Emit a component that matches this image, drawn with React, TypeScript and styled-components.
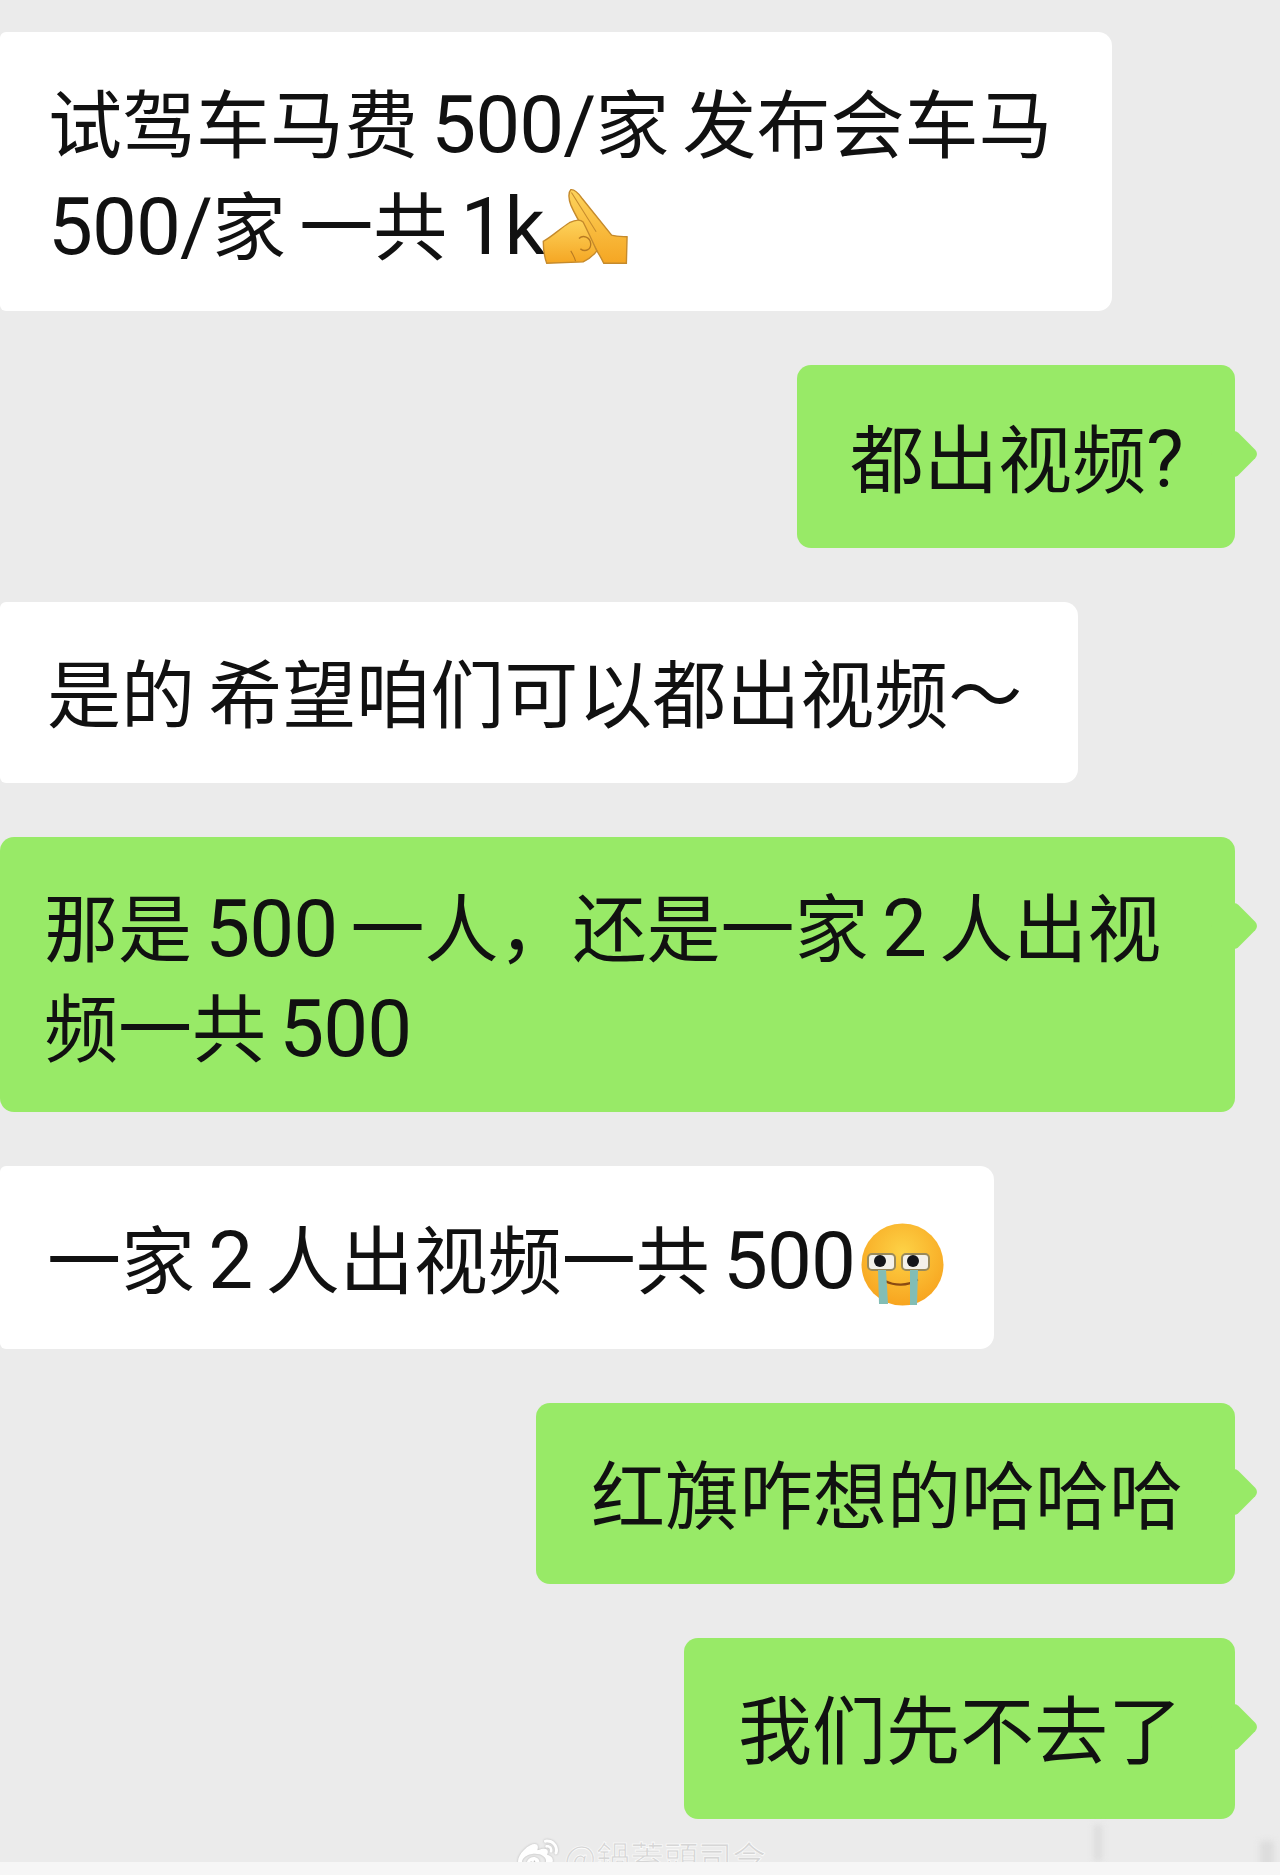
import { FC, ReactElement, ReactNode } from 'react';
import styled, { createGlobalStyle } from 'styled-components';
import { FaWeibo } from 'react-icons/fa';

const GlobalStyle = createGlobalStyle`
    html, body {
        margin: 0;
        padding: 0;
        background: #ebebeb;
    }
`;

const HandsEmoji: FC = (): ReactElement => (
    <HandsIcon viewBox="140 40 255 230">
        <defs>
            <linearGradient id="hand" x1="0" y1="0" x2="0" y2="1">
                <stop offset="0" stopColor="#fdd35c" />
                <stop offset="1" stopColor="#f5a623" />
            </linearGradient>
        </defs>
        <path
            d="M226 48C238 46 248 58 258 72L345 180C360 184 378 184 390 185L388 262H322C312 240 296 215 280 190C262 160 240 125 226 92C220 76 218 56 226 48Z"
            fill="url(#hand)"
            stroke="#c58a2c"
            strokeWidth="4"
        />
        <path
            d="M146 198C170 186 196 160 222 144C238 136 254 134 262 142C276 170 290 200 302 226C292 240 278 250 262 258L156 262C148 240 146 220 146 198Z"
            fill="url(#hand)"
            stroke="#c58a2c"
            strokeWidth="4"
        />
        <path d="M228 56L300 170" fill="none" stroke="#c58a2c" strokeWidth="3" />
        <path
            d="M250 190C262 178 282 186 284 204C286 220 270 232 254 220"
            fill="none"
            stroke="#b87a22"
            strokeWidth="4"
        />
        <path d="M226 226C232 236 238 246 240 256" fill="none" stroke="#b87a22" strokeWidth="3" />
    </HandsIcon>
);

const CryingEmoji: FC = (): ReactElement => (
    <CryingIcon viewBox="0 0 83 83">
        <defs>
            <radialGradient id="face" cx="0.5" cy="0.35" r="0.7">
                <stop offset="0" stopColor="#fdd246" />
                <stop offset="1" stopColor="#f7a11c" />
            </radialGradient>
        </defs>
        <circle cx="41.5" cy="41.5" r="41" fill="url(#face)" />
        <rect x="7" y="31" width="27" height="16" rx="4" fill="#f4f1ea" stroke="#9a8a5a" strokeWidth="2" />
        <rect x="41" y="31" width="27" height="16" rx="4" fill="#f4f1ea" stroke="#9a8a5a" strokeWidth="2" />
        <circle cx="19" cy="38" r="6" fill="#15151a" />
        <circle cx="52" cy="38" r="6" fill="#15151a" />
        <path d="M24 58C34 63 46 63 56 57" fill="none" stroke="#8a4a12" strokeWidth="2.4" strokeLinecap="round" />
        <path d="M17 47H25L27 81H18Z" fill="#82bdb5" />
        <path d="M49 47H57L56 82H49Z" fill="#82bdb5" />
    </CryingIcon>
);

type Row = {
    side: 'left' | 'right';
    width: number;
    inset: number;
    leading?: number;
    multi?: boolean;
    text: ReactNode;
};

const App: FC = (): ReactElement => {
    const rows: Row[] = [
        {
            side: 'left',
            width: 1112,
            inset: 48,
            leading: 100,
            multi: true,
            text: (
                <>
                    试驾车马费 <Num>500/</Num>家 发布会车马
                    <br />
                    <Num>500/</Num>家 一共 <Num>1k</Num>
                    <HandsEmoji />
                </>
            )
        },
        {
            side: 'right',
            width: 438,
            inset: 53,
            text: (
                <>
                    都出视频<Num>?</Num>
                </>
            )
        },
        { side: 'left', width: 1078, inset: 47, text: '是的 希望咱们可以都出视频～' },
        {
            side: 'right',
            width: 1235,
            inset: 44,
            multi: true,
            text: (
                <>
                    那是 <Num>500</Num> 一人，还是一家 <Num>2</Num> 人出视
                    <br />
                    频一共 <Num>500</Num>
                </>
            )
        },
        {
            side: 'left',
            width: 994,
            inset: 47,
            text: (
                <>
                    一家 <Num>2</Num> 人出视频一共 <Num>500</Num>
                    <CryingEmoji />
                </>
            )
        },
        { side: 'right', width: 699, inset: 55, text: '红旗咋想的哈哈哈' },
        { side: 'right', width: 551, inset: 54, text: '我们先不去了' }
    ];

    return (
        <Page>
            <GlobalStyle />
            <Chat>
                {rows.map((row, index) => (
                    <Bubble
                        key={index}
                        $side={row.side}
                        $width={row.width}
                        $inset={row.inset}
                        $leading={row.leading ?? 98}
                        $multi={!!row.multi}
                    >
                        {row.text}
                    </Bubble>
                ))}
            </Chat>
            <Watermark>
                <WeiboMark />
                <WatermarkName>@鍋蓋頭司令</WatermarkName>
            </Watermark>
            <Smudge $right={178} $bottom={14} $width={8} $height={36} />
            <Smudge $right={6} $bottom={6} $width={14} $height={28} />
            <BottomBar />
        </Page>
    );
};

const Page = styled.div`
    position: relative;
    width: 1280px;
    height: 1875px;
    overflow: hidden;
    background: #ebebeb;
    display: flex;
    flex-direction: column;
    font-family: Roboto, 'Noto Sans CJK SC', sans-serif;
`;
const Chat = styled.div`
    display: flex;
    flex-direction: column;
    gap: 54px;
    padding: 32px 45px 0 0;
`;
const Bubble = styled.div<{
    $side: 'left' | 'right';
    $width: number;
    $inset: number;
    $leading: number;
    $multi: boolean;
}>`
    position: relative;
    box-sizing: border-box;
    width: ${(p) => p.$width}px;
    align-self: ${(p) => (p.$side === 'left' ? 'flex-start' : 'flex-end')};
    padding: ${(p) => (p.$multi ? '43px 0 32px' : '46px 0 37px')};
    padding-left: ${(p) => p.$inset}px;
    border-radius: ${(p) => (p.$side === 'left' ? '6px 14px 14px 6px' : '14px')};
    background: ${(p) => (p.$side === 'left' ? '#ffffff' : '#98ea67')};
    color: #111111;
    font-size: 74px;
    line-height: ${(p) => p.$leading}px;
    word-spacing: -5px;
    white-space: nowrap;
    &::after {
        content: '';
        display: ${(p) => (p.$side === 'left' ? 'none' : 'block')};
        position: absolute;
        top: 71px;
        right: -17px;
        width: 36px;
        height: 36px;
        border-radius: 6px;
        background: #98ea67;
        transform: rotate(45deg);
    }
`;
const Num = styled.span`
    font-size: 80px;
    letter-spacing: -1px;
`;
const HandsIcon = styled.svg`
    width: 88px;
    height: 79px;
    margin-left: -3px;
    vertical-align: -12px;
`;
const CryingIcon = styled.svg`
    width: 83px;
    height: 83px;
    margin-left: 6px;
    vertical-align: -18px;
`;
const Watermark = styled.div`
    display: flex;
    align-items: center;
    gap: 4px;
    margin: 18px 0 0 516px;
`;
const WeiboMark = styled(FaWeibo)`
    width: 44px;
    height: 40px;
    color: #ffffff;
    filter: drop-shadow(0 0 1px #b5b5b5);
`;
const WatermarkName = styled.span`
    font-family: 'Noto Sans CJK TC', 'Noto Sans CJK SC', sans-serif;
    font-size: 34px;
    line-height: 38px;
    color: #d6d6d6;
    -webkit-text-stroke: 0.6px #ffffff;
`;
const Smudge = styled.div<{ $right: number; $bottom: number; $width: number; $height: number }>`
    position: absolute;
    right: ${(p) => p.$right}px;
    bottom: ${(p) => p.$bottom}px;
    width: ${(p) => p.$width}px;
    height: ${(p) => p.$height}px;
    background: #dcdcdc;
    filter: blur(3px);
`;
const BottomBar = styled.div`
    position: absolute;
    left: 0;
    right: 0;
    bottom: 0;
    height: 13px;
    background: #f6f6f6;
`;

export default App;
